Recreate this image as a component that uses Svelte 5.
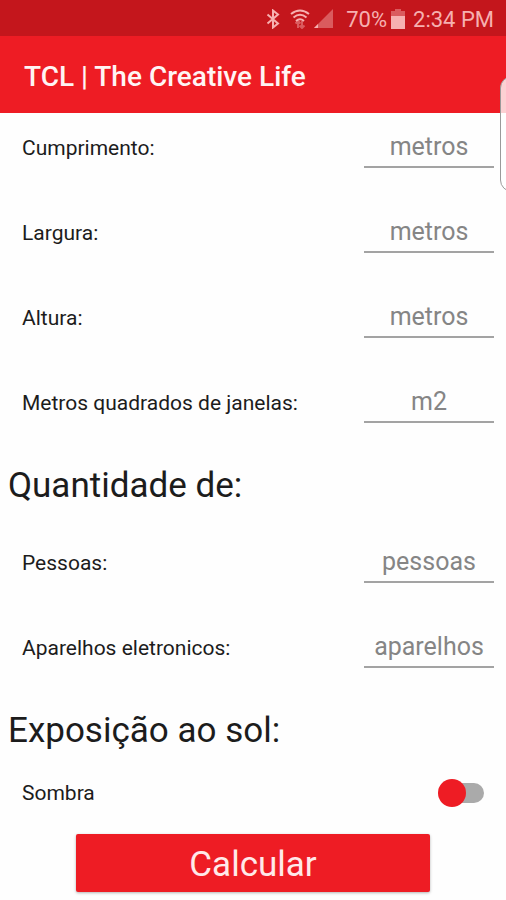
<script lang="ts">
  type Field = { id: string; label: string; unit: string };

  const room: Field[] = [
    { id: 'length', label: 'Cumprimento:', unit: 'metros' },
    { id: 'width', label: 'Largura:', unit: 'metros' },
    { id: 'height', label: 'Altura:', unit: 'metros' },
    { id: 'windows', label: 'Metros quadrados de janelas:', unit: 'm2' }
  ];

  const load: Field[] = [
    { id: 'people', label: 'Pessoas:', unit: 'pessoas' },
    { id: 'devices', label: 'Aparelhos eletronicos:', unit: 'aparelhos' }
  ];

  let values: Record<string, string> = $state({});
  let sunny = $state(false);
</script>

{#snippet fieldRow(field: Field)}
  <div class="row">
    <label for={field.id}>{field.label}</label>
    <input id={field.id} type="text" inputmode="decimal" placeholder={field.unit} bind:value={values[field.id]} />
  </div>
{/snippet}

<div class="screen">
  <div class="status">
    <svg class="bluetooth" viewBox="0 0 14 20" aria-hidden="true">
      <path d="M1.5 5.5 L12 14.5 L7 18.5 V1.5 L12 5.5 L1.5 14.5" />
    </svg>
    <svg class="wifi" viewBox="0 0 20 20" aria-hidden="true">
      <path d="M1 5 Q10 -2 19 5 M3.5 8.5 Q10 3 16.5 8.5 M6 12 Q10 8.5 14 12" />
      <path class="dim" d="M8 19 V12 M5.5 14.5 L8 12 L10.5 14.5 M12 12 V19 M9.5 16.5 L12 19 L14.5 16.5" />
    </svg>
    <svg class="signal" viewBox="0 0 20 20" aria-hidden="true">
      <path class="dim" d="M0 19 L19 0 V19 Z" />
      <path d="M0 19 L4 15 V19 Z" />
    </svg>
    <span>70%</span>
    <svg class="battery" viewBox="0 0 14 20" aria-hidden="true">
      <path class="dim" d="M4 0 H10 V2 H14 V7 H0 V2 H4 Z" />
      <path d="M0 7 H14 V20 H0 Z" />
    </svg>
    <time>2:34 PM</time>
  </div>

  <header>
    <h1>TCL | The Creative Life</h1>
    <div class="edge-handle"></div>
  </header>

  <main>
    {#each room as field (field.id)}
      {@render fieldRow(field)}
    {/each}

    <h2>Quantidade de:</h2>
    {#each load as field (field.id)}
      {@render fieldRow(field)}
    {/each}

    <h2>Exposição ao sol:</h2>
    <div class="row switch-row">
      <label for="sun">Sombra</label>
      <input id="sun" class="switch" type="checkbox" role="switch" bind:checked={sunny} />
    </div>

    <button type="button">Calcular</button>
  </main>
</div>

<style>
  :global(body) {
    margin: 0;
    background: #fefefe;
  }

  .screen {
    position: relative;
    overflow: hidden;
    min-height: 100vh;
    color: #1c1c1c;
    font-family: Roboto, 'Noto Sans', sans-serif;
  }

  .status {
    display: flex;
    align-items: center;
    justify-content: flex-end;
    height: 36px;
    padding: 2px 12px 0 0;
    box-sizing: border-box;
    color: #f6b0b0;
    font-size: 22px;
    background: #c4161c;
  }

  .status svg {
    height: 20px;
    fill: currentColor;
  }

  .status .dim {
    opacity: 0.45;
  }

  .status .bluetooth,
  .status .wifi {
    fill: none;
    stroke: currentColor;
    stroke-width: 2;
  }

  .bluetooth {
    width: 14px;
    margin-right: 10px;
  }

  .wifi {
    width: 20px;
    margin-right: 4px;
  }

  .signal {
    width: 20px;
    margin-right: 12px;
  }

  .battery {
    width: 14px;
    margin: 0 8px 0 4px;
  }

  header {
    position: relative;
    display: flex;
    align-items: center;
    height: 77px;
    padding: 4px 24px 0;
    box-sizing: border-box;
    color: #fff4f4;
    background: #ee1c24;
  }

  h1 {
    margin: 0;
    font-size: 28px;
    font-weight: 500;
  }

  /* the panel handle sticks out from the right edge, over the header */
  .edge-handle {
    position: absolute;
    top: 40px;
    right: -18px;
    width: 22px;
    height: 114px;
    border: 1px solid #9a9a9a;
    border-radius: 14px;
    background: rgba(255, 255, 255, 0.8);
  }

  main {
    display: flex;
    flex-direction: column;
  }

  .row {
    display: flex;
    align-items: flex-start;
    justify-content: space-between;
    gap: 16px;
    padding: 16px 12px 30px 22px;
  }

  label {
    font-size: 21px;
    line-height: 38px;
  }

  .row input[type='text'] {
    width: 130px;
    height: 39px;
    padding: 0 0 2px;
    border: 0;
    border-bottom: 2px solid #a3a3a3;
    border-radius: 0;
    box-sizing: border-box;
    color: inherit;
    font: inherit;
    font-size: 25px;
    text-align: center;
    background: transparent;
    outline: none;
  }

  .row input::placeholder {
    color: #858585;
    opacity: 1;
  }

  .row input[type='text']:focus {
    border-color: #ee1c24;
  }

  h2 {
    margin: 0;
    padding: 9px 8px 18px;
    font-size: 35px;
    font-weight: 400;
    line-height: 48px;
  }

  .switch-row {
    align-items: center;
    padding: 1px 22px 22px;
  }

  .switch {
    appearance: none;
    position: relative;
    width: 46px;
    height: 28px;
    margin: 0;
  }

  .switch::before {
    content: '';
    position: absolute;
    inset: 4px 0 4px 8px;
    border-radius: 10px;
    background: #aaa;
  }

  .switch::after {
    content: '';
    position: absolute;
    top: 0;
    left: 0;
    width: 28px;
    height: 28px;
    border-radius: 50%;
    background: #ee1c24;
  }

  .switch:checked::after {
    left: 18px;
  }

  button {
    align-self: center;
    width: 70%;
    height: 58px;
    padding: 2px 0 0;
    border: 0;
    border-radius: 2px;
    color: #ffe9e9;
    font: inherit;
    font-size: 35px;
    background: #ee1c24;
    box-shadow: 0 1px 3px rgba(0, 0, 0, 0.3);
  }
</style>
